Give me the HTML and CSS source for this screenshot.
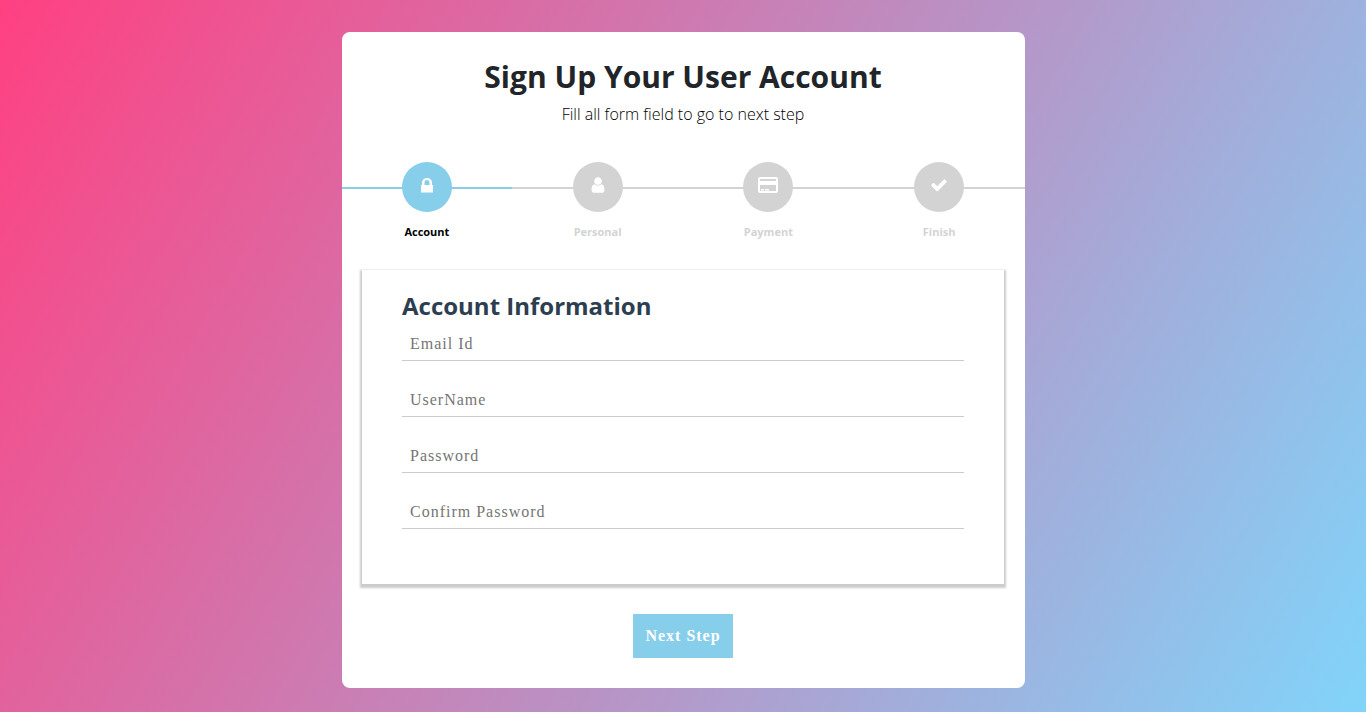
FILE: index.html
```html
<!DOCTYPE html>
<html lang="en">
<head>
<meta charset="utf-8">
<meta name="viewport" content="width=device-width, initial-scale=1">
<title>Sign Up Your User Account</title>
<link rel="stylesheet" href="styles.css">
</head>
<body>
<main class="card">
  <h1 class="title">Sign Up Your User Account</h1>
  <p class="subtitle">Fill all form field to go to next step</p>
  <form class="signup">
    <ol class="steps">
      <li class="step active">
        <span class="dot"><svg class="icon" viewBox="0 0 18 18" aria-hidden="true"><path fill-rule="evenodd" d="M3 9h1V6.500a5 4.500 0 0 1 10 0V9h1v7.500H3zM6.500 9h5V6.500a2.500 2.500 0 0 0-5 0z"/></svg></span>
        <strong class="label">Account</strong>
      </li>
      <li class="step">
        <span class="dot"><svg class="icon" viewBox="0 0 1792 1792" aria-hidden="true"><path d="M1536 1399q0 109-62.500 187t-150.500 78h-854q-88 0-150.500-78t-62.500-187q0-85 8.500-160.500t31.500-152 58.500-131 94-89 134.500-34.500q131 128 313 128t313-128q76 0 134.500 34.500t94 89 58.500 131 31.500 152 8.500 160.500zm-256-887q0 159-112.500 271.500t-271.500 112.500-271.500-112.500-112.500-271.500 112.500-271.500 271.500-112.500 271.500 112.500 112.500 271.500z"/></svg></span>
        <strong class="label">Personal</strong>
      </li>
      <li class="step">
        <span class="dot"><svg class="icon wide" viewBox="0 0 20 18" aria-hidden="true"><path fill-rule="evenodd" d="M2 1h16a2 2 0 0 1 2 2v12a2 2 0 0 1-2 2H2a2 2 0 0 1-2-2V3a2 2 0 0 1 2-2zM2 3v2h16V3zM2 9v6h16V9zM3 13h3v1.500H3zM7 13h4v1.500H7z"/></svg></span>
        <strong class="label">Payment</strong>
      </li>
      <li class="step">
        <span class="dot"><svg class="icon" viewBox="0 0 1792 1792" aria-hidden="true"><path d="M1671 566q0 40-28 68l-724 724-136 136q-28 28-68 28t-68-28l-136-136-362-362q-28-28-28-68t28-68l136-136q28-28 68-28t68 28l294 295 656-657q28-28 68-28t68 28l136 136q28 28 28 68z"/></svg></span>
        <strong class="label">Finish</strong>
      </li>
    </ol>
    <section class="panel">
      <h2 class="heading">Account Information</h2>
      <input class="field" type="email" name="email" placeholder="Email Id" aria-label="Email Id">
      <input class="field" type="text" name="username" placeholder="UserName" aria-label="UserName">
      <input class="field" type="password" name="password" placeholder="Password" aria-label="Password">
      <input class="field" type="password" name="confirm" placeholder="Confirm Password" aria-label="Confirm Password">
    </section>
    <button class="next" type="button">Next Step</button>
  </form>
</main>
</body>
</html>
```
FILE: styles.css
```css
* {
  box-sizing: border-box;
}

body {
  margin: 0;
  min-height: 100vh;
  display: flex;
  flex-direction: column;
  align-items: center;
  padding: 32px 0 24px;
  background: linear-gradient(120deg, #ff4081, #81d4fa);
  color: #212529;
  font-family: "Segoe UI", "Open Sans", sans-serif;
}

.card {
  width: 50%;
  padding: 24px 0 30px;
  background: #fff;
  border-radius: 8px;
  text-align: center;
}

.title {
  margin: 0;
  font-size: 30px;
  line-height: 42px;
  font-weight: 700;
}

.subtitle {
  margin: 4px 0 0;
  color: #000;
  font-size: 16px;
  line-height: 24px;
  font-weight: 300;
}

.signup {
  display: flex;
  flex-direction: column;
  align-items: center;
  margin-top: 36px;
}

.steps {
  display: flex;
  width: 100%;
  margin: 0 0 28px;
  padding: 0;
  list-style: none;
  color: lightgrey;
}

.step {
  flex: 1;
  display: flex;
  flex-direction: column;
  align-items: center;
  gap: 10px;
  background: linear-gradient(currentColor, currentColor) 0 25px / 100% 2px no-repeat;
}

.step.active {
  color: skyblue;
}

.dot {
  display: flex;
  align-items: center;
  justify-content: center;
  width: 50px;
  height: 50px;
  padding-bottom: 4px;
  border-radius: 50%;
  background: currentColor;
}

.icon {
  width: 18px;
  height: 18px;
  fill: #fff;
}

.icon.wide {
  width: 20px;
}

.label {
  font-size: 11px;
  line-height: 20px;
  font-weight: 700;
}

.active .label {
  color: #000;
}

.panel {
  width: 94%;
  padding: 20px 40px 30px;
  box-shadow: 0 2px 2px 2px #ccc;
  text-align: left;
}

.heading {
  margin: 0 0 8px;
  color: #2c3e50;
  font-size: 24px;
  line-height: 32px;
  font-weight: 700;
}

.field {
  display: block;
  width: 100%;
  height: 31px;
  margin: 0 0 25px;
  padding: 0 8px 2px;
  border: 0;
  border-bottom: 1px solid #ccc;
  border-radius: 0;
  outline: 0;
  background: transparent;
  color: #2c3e50;
  font-family: "Liberation Serif", serif;
  font-size: 16px;
  letter-spacing: 1px;
}

.field::placeholder {
  color: #757575;
}

.next {
  min-width: 100px;
  height: 44px;
  margin-top: 30px;
  padding: 0 5px;
  border: 0;
  background: skyblue;
  color: #fff;
  font: bold 16px "Liberation Serif", serif;
  letter-spacing: 1px;
}
```
